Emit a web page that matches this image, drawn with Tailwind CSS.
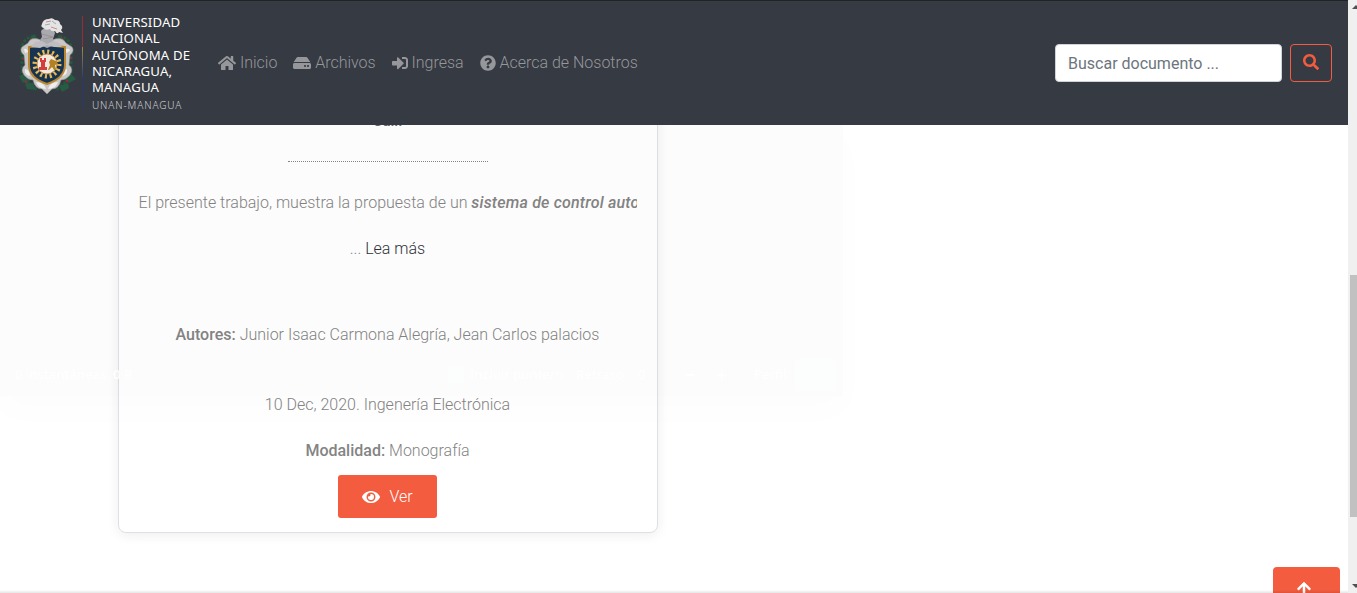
<!DOCTYPE html>
<html lang="es">
<head>
<meta charset="utf-8">
<title>UNAN-Managua</title>
<script src="https://cdn.jsdelivr.net/npm/@tailwindcss/browser@4"></script>
</head>
<body class="flex h-[593px] w-[1357px] overflow-hidden bg-white font-['Roboto',sans-serif] text-base font-light text-[#848484]">
<div class="relative flex h-full w-[1348px] flex-col">
  <header class="relative z-20 flex h-[125px] shrink-0 items-center border-t border-[#212326] bg-[#363a42] px-4">
    <a class="flex h-full w-[186px] shrink-0 pt-[14px]">
      <svg class="mt-px h-[82px] w-[62px] shrink-0" viewBox="0 0 62 82">
        <g fill="none" stroke="#24583f" stroke-width="3" stroke-dasharray="3 1.5"><path d="M18 20Q5 23 6 34v17Q5 60 12 67L22 75M43 20Q56 23 55 34v17q1 9-6 16L39 75"/></g>
        <g fill="#275b43"><path d="M3 60l7-3 5 7-8 3zM47 63l8-5 5 5-7 4zM9 68l8-1 3 7-9-1zM43 70l9-3 1 5-7 4zM4 36l5-3 1 8zM53 33l5 4-5 4zM13 23l6-5 2 5zM42 19l7 5-8 1z"/></g>
        <g fill="#982a3e"><circle cx="10" cy="66" r="1.3"/><circle cx="51" cy="65" r="1.3"/><circle cx="7" cy="43" r="1"/><circle cx="55" cy="42" r="1"/><circle cx="16" cy="23" r="1"/><circle cx="46" cy="22" r="1"/></g>
        <path fill="#c9c8c7" stroke="#8e8d8e" stroke-width=".6" d="M25 24Q15 20 12 27L6 31q-3 4 2 8l1 10q-5 4-1 10 4 5 9 5 2 9 9 9l5 5 5-5q7 0 9-9 5 0 9-5 4-6-1-10l1-10q5-4 2-8l-6-4q-4-7-14-3z"/>
        <path fill="#eee" d="M8 33q3-1 4 3l-3 1zm42 0q4-1 4 2l-4 2zM9 53q5 1 5 7-6-1-5-7zm42 0q-5 1-5 7 6-1 5-7zM20 66q8 0 10 7-8 0-10-7zm22 0q-8 0-10 7 8 0 10-7z"/>
        <path fill="#163451" stroke="#ba8630" stroke-width="2" d="M13 31q9 0 18-3 9 3 18 3v18q0 13-18 19-18-6-18-19z"/>
        <circle cx="31" cy="48" r="12" fill="none" stroke="#e5b957" stroke-width="5" stroke-dasharray="2 2.7"/>
        <circle cx="31" cy="48" r="10" fill="#f1e9df" stroke="#c69447"/>
        <path fill="#d53c3d" d="M24 42h2v2h2v-2h2v4h-1v5h2v3h-8v-3h2v-5h-1z"/>
        <path fill="#b38123" d="M33 46l2-3 5 2 2 3-3 1 1 5h-2l-2-3-3 3h-1l2-5z"/>
        <path fill="#aaa9ad" d="M24 29q-1-5 2-8l-1-6 4-4 8 1 2 5-2 6 2 6-8 3z"/>
        <path fill="#bebdbf" d="M15 31l4-5 7-1 5 3 6-3 6 2 3 4-8 0-7-2-7 3z"/>
        <path fill="#e6e3e3" d="M26 8q1-5 7-5 3-2 6 1 5 0 5 4 4 3 1 6l2 3-4-1q-2 3-4-1-4 1-5-2-5 2-6-1-4-1-2-4z"/>
        <path fill="none" stroke="#c68f8c" d="M30 6l5-1m0 6l6 2"/><path fill="none" stroke="#8faec2" d="M29 9l5-1m2-3l4 3"/><path fill="none" stroke="#8d8d91" stroke-width=".7" d="M26 18l11 3M27 23l10-2"/>
      </svg>
      <span class="mt-[1px] ml-1 h-[93px] w-px shrink-0 bg-linear-to-b from-[#902e39] from-33% via-[#9e8936] via-34% to-[#28396f] to-67%"></span>
      <span class="-mt-px ml-[9px] flex flex-col font-['Noto_Sans',sans-serif] whitespace-nowrap text-white">
        <span class="text-[13.2px] leading-[16.25px] font-normal tracking-[.15px]">UNIVERSIDAD<br>NACIONAL<br>AUTÓNOMA DE<br>NICARAGUA,<br>MANAGUA</span>
        <span class="mt-[2px] text-[10px] leading-4 font-light tracking-[.9px] text-[#d0d1d3]">UNAN-MANAGUA</span>
      </span>
    </a>
    <nav class="ml-4 flex items-center gap-[15.9px] text-[#95979b]">
      <a class="flex items-center gap-[3.9px] whitespace-nowrap"><svg class="h-4 w-[18px]" fill="currentColor" viewBox="0 0 576 512"><path d="M280.37 148.26L96 300.11V464a16 16 0 0 0 16 16l112.06-.29a16 16 0 0 0 15.92-16V368a16 16 0 0 1 16-16h64a16 16 0 0 1 16 16v95.64a16 16 0 0 0 16 16.05L464 480a16 16 0 0 0 16-16V300L295.67 148.26a12.19 12.19 0 0 0-15.3 0zM571.6 251.47L488 182.56V44.05a12 12 0 0 0-12-12h-56a12 12 0 0 0-12 12v72.61L318.47 43a48 48 0 0 0-61 0L4.34 251.47a12 12 0 0 0-1.6 16.9l25.5 31A12 12 0 0 0 45.15 301l235.22-193.74a12.19 12.19 0 0 1 15.3 0L530.9 301a12 12 0 0 0 16.9-1.6l25.5-31a12 12 0 0 0-1.7-16.93z"/></svg>Inicio</a>
      <a class="flex items-center gap-[3.9px] whitespace-nowrap"><svg class="h-4 w-[18px]" fill="currentColor" viewBox="0 0 576 512"><path d="M576 304v96c0 26.51-21.49 48-48 48H48c-26.51 0-48-21.49-48-48v-96c0-26.51 21.49-48 48-48h480c26.51 0 48 21.49 48 48zm-48-80a79.557 79.557 0 0 1 30.777 6.165L462.25 85.374A48.003 48.003 0 0 0 422.311 64H153.689a48 48 0 0 0-39.938 21.374L17.223 230.165A79.557 79.557 0 0 1 48 224h480zm-48 96c-17.673 0-32 14.327-32 32s14.327 32 32 32 32-14.327 32-32-14.327-32-32-32zm-96 0c-17.673 0-32 14.327-32 32s14.327 32 32 32 32-14.327 32-32-14.327-32-32-32z"/></svg>Archivos</a>
      <a class="flex items-center gap-[3.9px] whitespace-nowrap"><svg class="size-4" fill="currentColor" viewBox="0 0 512 512"><path d="M416 448h-84c-6.6 0-12-5.4-12-12v-40c0-6.6 5.4-12 12-12h84c17.7 0 32-14.3 32-32V160c0-17.7-14.3-32-32-32h-84c-6.6 0-12-5.4-12-12V76c0-6.6 5.4-12 12-12h84c53 0 96 43 96 96v192c0 53-43 96-96 96zm-47-201L201 79c-15-15-41-4.5-41 17v96H24c-13.3 0-24 10.7-24 24v96c0 13.3 10.7 24 24 24h136v96c0 21.5 26 32 41 17l168-168c9.3-9.4 9.3-24.6 0-34z"/></svg>Ingresa</a>
      <a class="flex items-center gap-[3.9px] whitespace-nowrap"><svg class="size-4" fill="currentColor" viewBox="0 0 512 512"><path d="M504 256c0 136.997-111.043 248-248 248S8 392.997 8 256C8 119.083 119.043 8 256 8s248 111.083 248 248zM262.655 90c-54.497 0-89.255 22.957-116.549 63.758-3.536 5.286-2.353 12.415 2.715 16.258l34.699 26.31c5.205 3.947 12.621 3.008 16.665-2.122 17.864-22.658 30.113-35.797 57.303-35.797 20.429 0 45.698 13.148 45.698 32.958 0 14.976-12.363 22.667-32.534 33.976C247.128 238.528 216 254.941 216 296v4c0 6.627 5.373 12 12 12h56c6.627 0 12-5.373 12-12v-1.333c0-28.462 83.186-29.647 83.186-106.667 0-58.002-60.165-102-116.531-102zM256 338c-25.365 0-46 20.635-46 46 0 25.364 20.635 46 46 46s46-20.636 46-46c0-25.365-20.635-46-46-46z"/></svg>Acerca de Nosotros</a>
    </nav>
    <form class="ml-auto flex gap-2">
      <input class="h-[38px] w-[227px] rounded border border-[#ced4da] bg-white px-3 font-normal placeholder:text-[#6c757d]" placeholder="Buscar documento ...">
      <button type="button" aria-label="Buscar" class="flex h-[38px] w-[42px] items-center justify-center rounded border border-[#f35c3f] pb-0.5 text-[#f35c3f]"><svg class="size-4" fill="currentColor" viewBox="0 0 512 512"><path d="M505 442.7L405.3 343c-4.5-4.5-10.6-7-17-7H372c27.6-35.3 44-79.7 44-128C416 93.1 322.9 0 208 0S0 93.1 0 208s93.1 208 208 208c48.3 0 92.7-16.4 128-44v16.3c0 6.4 2.5 12.5 7 17l99.7 99.7c9.4 9.4 24.6 9.4 33.9 0l28.3-28.3c9.4-9.4 9.4-24.6.1-34zM208 336c-70.7 0-128-57.2-128-128 0-70.7 57.2-128 128-128 70.7 0 128 57.2 128 128 0 70.7-57.2 128-128 128z"/></svg></button>
    </form>
  </header>

  <main class="relative min-h-0 flex-1 overflow-hidden pl-[118px]">
    <article class="-mt-[17px] flex h-[425px] w-[540px] flex-col items-center rounded-lg border border-[#dfe0e6] bg-white pr-5 pl-[19px] text-center leading-6 shadow-[0_2px_12px_rgba(40,40,70,0.08)]">
      <h3 class="h-6 text-[15px] font-medium text-[#62666d]">Cali.</h3>
      <div class="mt-[28px] ml-px w-[200px] border-t border-dotted border-[#848484]"></div>
      <p class="mt-[29px] w-full overflow-hidden pl-[.6px] text-left whitespace-nowrap">El presente trabajo, muestra la propuesta de un <em class="font-medium tracking-[.19px]">sistema de control automático</em></p>
      <p class="mt-[22px]">... <a class="text-[#303338]">Lea más</a></p>
      <p class="mt-[62px]"><b class="font-medium">Autores:</b> Junior Isaac Carmona Alegría, Jean Carlos palacios</p>
      <p class="mt-[46px]">10 Dec, 2020. Ingenería Electrónica</p>
      <p class="mt-[22px]"><b class="font-medium">Modalidad:</b> Monografía</p>
      <a class="mt-[12px] flex h-[43px] w-[99px] shrink-0 items-center justify-center gap-[9px] rounded-[3px] bg-[#f35c3f] text-white"><svg class="h-4 w-[18px]" fill="currentColor" viewBox="0 0 576 512"><path d="M572.52 241.4C518.29 135.59 410.93 64 288 64S57.68 135.64 3.48 241.41a32.35 32.35 0 0 0 0 29.19C57.71 376.41 165.07 448 288 448s230.32-71.64 284.52-177.41a32.35 32.35 0 0 0 0-29.19zM288 400a144 144 0 1 1 144-144 143.93 143.93 0 0 1-144 144zm0-240a95.31 95.31 0 0 0-25.31 3.79 47.85 47.85 0 0 1-66.9 66.9A95.78 95.78 0 1 0 288 160z"/></svg>Ver</a>
    </article>

    <!-- fading capture dialog over the page -->
    <div class="pointer-events-none absolute top-0 left-0 h-[271px] w-[843px] bg-black/[.012] shadow-[0_14px_34px_4px_rgba(0,0,0,0.012)]">
      <div class="flex h-full items-end pl-[15px] font-['Noto_Sans',sans-serif] text-[13px] font-medium whitespace-nowrap text-white">
        <div class="flex h-[42px] items-center *:shrink-0">
          <span class="w-[433px]">0 instantáneas. 0 B</span>
          <span class="mr-1.5 h-4 w-4 bg-[#fcfefd]"></span>
          <span class="w-[106px]">Incluir puntero</span>
          <span class="w-[62px]">Retraso:</span>
          <span class="w-[46px]">0</span>
          <span class="w-[32px] text-xl leading-6">−</span>
          <span class="w-[38px] text-xl leading-6">+</span>
          <span class="w-[41px]">Perfil:</span>
          <span class="flex h-8 w-[41px] items-center justify-center bg-[#fcfefd]">↓</span>
        </div>
      </div>
    </div>

    <a aria-label="Subir" class="absolute top-[442px] right-2 flex h-[43px] w-[67px] items-center justify-center rounded bg-[#f35c3f] pr-[5px] text-white"><svg class="h-4 w-[14px]" fill="currentColor" viewBox="0 0 448 512"><path d="M34.9 289.5l-22.2-22.2c-9.4-9.4-9.4-24.6 0-33.9L207 39c9.4-9.4 24.6-9.4 33.9 0l194.3 194.3c9.4 9.4 9.4 24.6 0 33.9L413 289.4c-9.5 9.5-25 9.3-34.3-.4L264 168.6V456c0 13.3-10.7 24-24 24h-32c-13.3 0-24-10.7-24-24V168.6L69.2 289.1c-9.3 9.8-24.8 10-34.3.4z"/></svg></a>
    <div class="absolute bottom-0 left-0 h-[3px] w-full bg-linear-to-b from-transparent to-black/10"></div>
  </main>
</div>
<aside class="flex h-full w-[9px] flex-col items-end bg-[#f0f0f0] pt-[5px] pb-[5px]">
  <svg class="h-[4px] w-[7px]" viewBox="0 0 7 4"><path fill="#505050" d="M2 4l4-4 1 1v3z"/></svg>
  <div class="mt-[266px] h-[242px] w-[7px] bg-[#c1c1c1]"></div>
  <svg class="mt-auto h-[4px] w-[7px]" viewBox="0 0 7 4"><path fill="#505050" d="M2 0h5v3l-1 1z"/></svg>
</aside>
</body>
</html>
